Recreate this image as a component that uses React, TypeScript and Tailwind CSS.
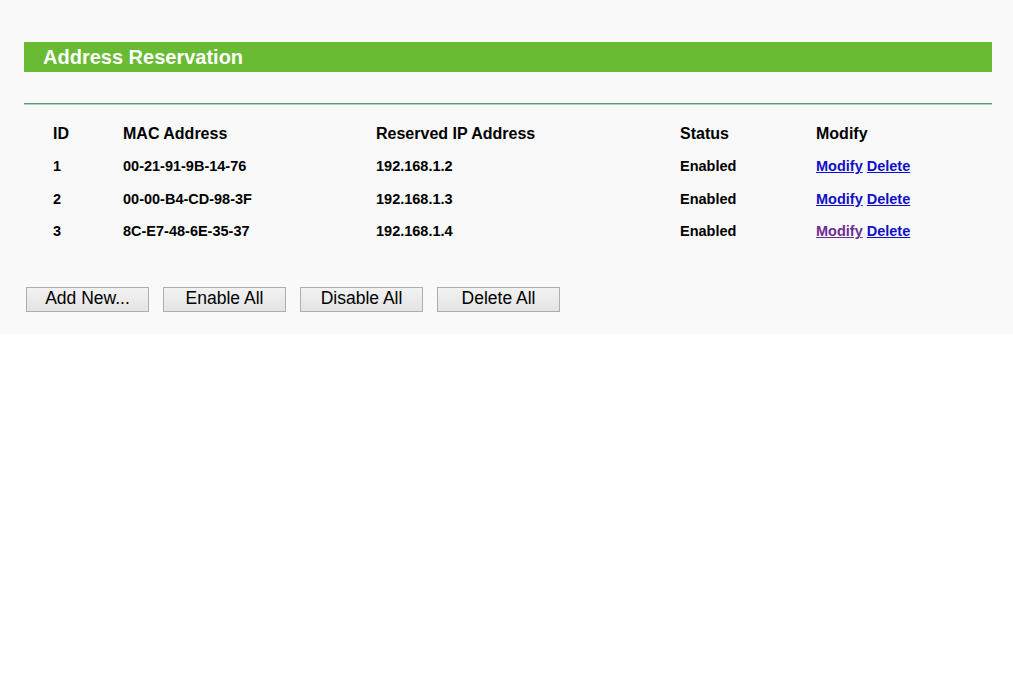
const reservations = [
  { id: 1, mac: "00-21-91-9B-14-76", ip: "192.168.1.2", status: "Enabled", visited: false },
  { id: 2, mac: "00-00-B4-CD-98-3F", ip: "192.168.1.3", status: "Enabled", visited: false },
  { id: 3, mac: "8C-E7-48-6E-35-37", ip: "192.168.1.4", status: "Enabled", visited: true },
]

const actions = ["Add New...", "Enable All", "Disable All", "Delete All"]

const cols = "grid grid-cols-[70px_253px_304px_136px_1fr]"

export default function App() {
  return (
    <div className="min-h-[688px] bg-white font-['Liberation_Sans',Arial,sans-serif] text-black">
      <div className="bg-[#f9f9f9] pt-[42px] pb-[22px]">
        <div className="ml-[24px] mr-[21px] h-[30px] bg-[#69bb33] flex items-center pl-[19px]">
          <h1 className="text-[20px] font-bold text-white leading-none">Address Reservation</h1>
        </div>

        <div className="ml-[24px] mr-[21px] mt-[31px]">
          <div className="h-px bg-[#5e9676]" />
          <div className="h-px bg-[#b2d3bf]" />
        </div>

        <div className="pl-[53px] mt-[17px]">
          <div className={`${cols} text-[16px] font-bold h-[20px] items-center`}>
            <span>ID</span>
            <span>MAC Address</span>
            <span>Reserved IP Address</span>
            <span>Status</span>
            <span>Modify</span>
          </div>
          <div className="mt-[9px]">
            {reservations.map((r) => (
              <div key={r.id} className={`${cols} text-[14.5px] font-bold h-[32.5px] items-center`}>
                <span>{r.id}</span>
                <span>{r.mac}</span>
                <span>{r.ip}</span>
                <span>{r.status}</span>
                <span className="flex gap-[4px]">
                  <a href="#" className={`underline ${r.visited ? "text-[#6b2e93]" : "text-[#1010c8]"}`}>Modify</a>
                  <a href="#" className="underline text-[#1010c8]">Delete</a>
                </span>
              </div>
            ))}
          </div>
        </div>

        <div className="flex gap-[14px] pl-[26px] mt-[38px]">
          {actions.map((label) => (
            <button
              key={label}
              className="w-[123px] h-[25px] border border-[#adadad] bg-gradient-to-b from-[#f2f2f2] to-[#e4e4e4] text-[17.5px] leading-none text-black"
            >
              {label}
            </button>
          ))}
        </div>
      </div>
    </div>
  )
}
